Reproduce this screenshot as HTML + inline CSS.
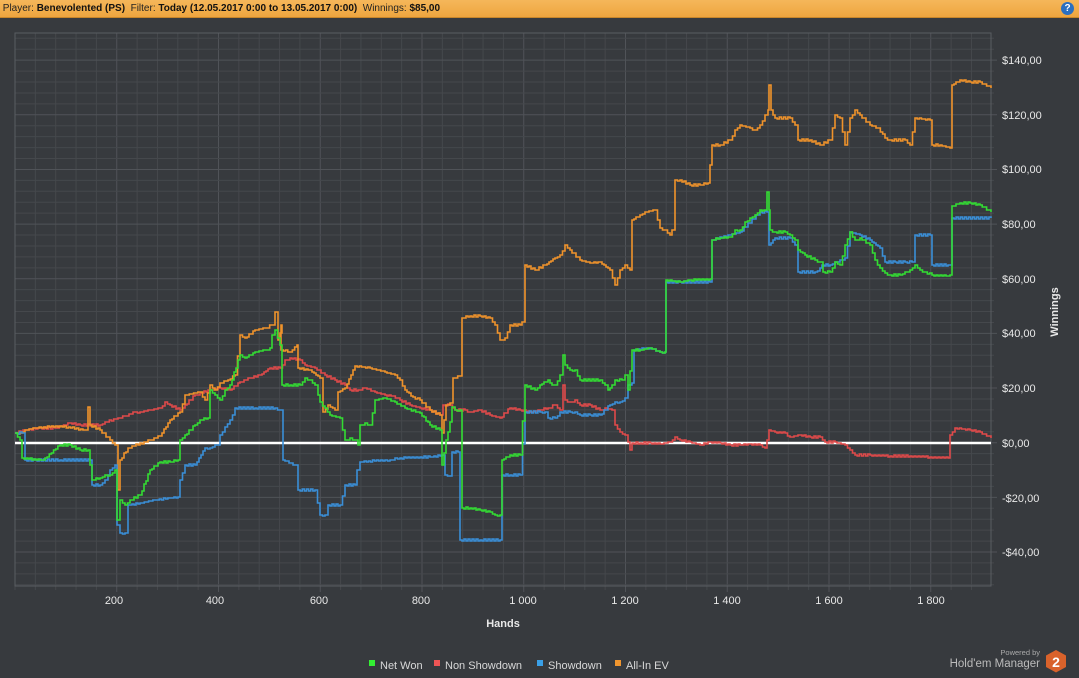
<!DOCTYPE html>
<html><head><meta charset="utf-8"><style>
html,body{margin:0;padding:0;background:#373a3e;width:1079px;height:678px;overflow:hidden;font-family:"Liberation Sans",sans-serif}
#hdr{position:absolute;left:0;top:0;width:1079px;height:17px;background:linear-gradient(#f5b75a,#eea53f);border-bottom:1px solid #c8862a;font-size:10px;line-height:17px;color:#222;white-space:nowrap}
#hdr b{font-weight:bold;color:#111}
#help{position:absolute;right:5px;top:2px;width:13px;height:13px;border-radius:50%;background:#2a6fc0;color:#fff;font-size:10px;font-weight:bold;text-align:center;line-height:13px}
svg{position:absolute;left:0;top:0}
</style></head><body>
<div id="hdr">&nbsp;Player: <b>Benevolented (PS)</b> &nbsp;Filter: <b>Today (12.05.2017 0:00 to 13.05.2017 0:00)</b> &nbsp;Winnings: <b>$85,00</b><div id="help">?</div></div>
<svg id="s" width="1079" height="678" xmlns="http://www.w3.org/2000/svg">
<g id="grid"></g>
<rect x="15" y="33" width="976" height="553" fill="none" stroke="#5a5d62" stroke-width="1"/>
<g font-size="11" fill="#e8e8e8" font-family="Liberation Sans,sans-serif">
<g text-anchor="middle">
<text x="114" y="604">200</text><text x="215" y="604">400</text><text x="319" y="604">600</text><text x="421" y="604">800</text><text x="523" y="604">1 000</text><text x="625" y="604">1 200</text><text x="727" y="604">1 400</text><text x="829" y="604">1 600</text><text x="931" y="604">1 800</text>
<text x="503" y="627" font-weight="bold">Hands</text>
</g>
<text x="1002" y="64">$140,00</text><text x="1002" y="119">$120,00</text><text x="1002" y="173">$100,00</text><text x="1002" y="228">$80,00</text><text x="1002" y="283">$60,00</text><text x="1002" y="337">$40,00</text><text x="1002" y="392">$20,00</text><text x="1002" y="447">$0,00</text><text x="1002" y="502">-$20,00</text><text x="1002" y="556">-$40,00</text>
<text transform="translate(1058,312) rotate(-90)" text-anchor="middle" font-weight="bold">Winnings</text>
</g>
<line x1="15" y1="443" x2="991" y2="443" stroke="#fff" stroke-width="2.5"/>
<g fill="none" stroke-width="1.6" stroke-linejoin="miter" id="series">
<polyline stroke="#e04a4a" points="15,433 25,430 40,428 55,428 70,423 80,425 100,425 105,422 118,418 125,416 135,412 140,412 150,410 160,408 165,402 170,405 180,410 185,405 195,395 200,393 210,390 220,388 230,390 240,382 250,378 260,375 270,368 280,368 285,360 290,358 300,360 305,365 315,368 325,375 335,380 345,385 350,390 358,390 365,388 375,392 385,395 393,396 400,400 410,405 420,408 430,410 440,415 443,405 450,405 455,410 465,410 470,412 480,410 490,415 500,418 510,408 520,410 530,412 540,410 548,408 555,405 560,410 563,385 565,400 570,402 575,400 580,405 590,405 600,410 605,408 612,410 615,425 620,432 625,435 628,442 630,450 632,443 640,443 650,443 660,444 670,442 675,437 680,440 690,442 700,445 710,442 720,443 730,445 740,445 750,444 760,445 765,448 769,430 775,432 785,433 790,437 800,435 810,437 820,437 825,442 835,442 845,445 850,450 855,455 870,455 890,456 910,456 930,457 948,458 950,435 955,428 970,430 980,432 991,438"/>
<polyline stroke="#f0932b" points="15,433 20,433 25,430 35,428 60,426 85,430 88,407 90,425 100,430 110,440 115,445 118,490 120,460 128,448 150,440 160,436 170,420 180,412 185,395 200,392 205,400 210,385 215,390 220,383 228,380 235,375 240,335 245,338 255,330 265,328 272,325 275,312 278,340 282,325 281,350 290,352 297,345 298,368 310,370 320,378 323,412 328,405 335,410 338,392 345,388 355,366 370,368 385,372 395,375 400,380 405,390 413,397 420,400 430,410 440,415 442,433 446,405 450,403 453,378 460,376 462,318 470,316 480,316 490,318 495,325 500,340 505,338 510,325 520,325 522,322 525,265 535,270 545,265 555,258 560,255 565,245 570,250 580,260 590,263 600,262 610,270 615,285 620,270 625,265 630,270 632,220 640,215 645,212 655,210 660,228 665,230 670,235 672,230 675,180 680,180 690,185 700,185 708,183 712,145 720,145 730,140 735,130 740,125 750,128 755,130 760,125 765,115 768,110 769,85 771,110 775,118 790,118 795,125 798,140 810,140 820,145 830,140 835,115 840,118 845,145 850,118 855,110 860,115 870,125 878,128 885,138 890,140 905,140 910,145 915,118 930,120 932,145 940,145 950,148 952,85 960,80 970,82 980,82 991,88"/>
<polyline stroke="#3a8fd8" points="15,433 22,433 25,460 35,460 60,460 90,460 92,485 100,485 105,480 108,475 110,470 115,465 117,525 120,533 125,533 128,505 140,503 155,500 170,498 178,497 180,480 185,465 195,465 205,448 210,448 215,445 218,445 220,435 225,427 230,420 235,408 255,408 275,408 280,410 283,460 295,465 298,490 315,490 320,515 325,515 328,505 340,505 345,485 355,485 357,470 360,462 385,460 390,460 395,458 400,458 420,457 430,457 442,455 445,475 450,476 452,452 458,452 460,540 480,540 500,540 502,475 510,475 520,475 525,412 540,412 545,412 548,418 555,418 560,412 570,412 575,412 580,415 590,415 600,415 610,405 615,402 620,402 625,398 628,385 632,383 634,350 650,348 660,352 665,352 666,282 680,282 710,282 712,240 740,232 760,212 767,212 769,245 775,238 790,238 795,245 798,272 815,272 820,268 822,265 830,265 835,262 840,260 845,258 850,232 860,235 870,240 880,248 885,262 895,262 905,262 912,262 915,235 930,235 932,265 948,265 950,265 952,218 991,218"/>
<polyline stroke="#33dd33" points="15,433 20,440 22,458 40,460 45,458 60,445 70,445 80,450 88,450 90,465 92,480 100,478 105,475 110,475 115,470 117,520 120,500 125,505 130,500 140,495 150,470 160,462 170,462 178,460 180,440 185,435 195,425 200,420 208,418 210,390 215,395 220,400 225,390 230,385 240,355 245,358 255,352 265,350 270,348 272,335 275,330 280,345 282,385 290,385 300,385 305,378 310,380 315,385 318,395 320,402 325,408 330,415 340,418 345,440 350,438 355,440 358,445 360,425 365,423 370,425 375,400 385,398 395,402 405,408 420,413 430,425 440,430 442,465 446,440 450,422 452,407 455,410 460,410 462,508 470,508 480,510 490,512 495,515 500,515 502,460 510,455 520,455 525,385 535,390 540,385 548,380 552,385 555,385 560,375 563,355 565,365 570,370 575,370 580,380 600,380 605,385 608,390 612,385 615,380 622,380 625,375 628,390 632,350 640,350 650,348 660,352 665,352 666,280 680,282 690,280 710,279 712,240 720,238 730,237 735,230 740,230 745,222 750,218 755,215 760,210 764,210 767,192 769,210 770,230 775,232 785,232 790,235 795,240 798,250 805,255 815,260 820,262 823,272 830,272 835,262 840,265 845,245 850,232 855,240 860,238 870,245 875,260 880,268 885,273 890,275 900,275 905,272 910,270 915,265 920,270 925,272 932,275 948,276 950,275 952,206 960,203 970,203 980,205 991,212"/>
</g>
<g font-size="11" fill="#d8d8d8" font-family="Liberation Sans,sans-serif">
<rect x="369" y="660" width="6" height="6" fill="#33ee33"/><text x="380" y="669">Net Won</text>
<rect x="434" y="660" width="6" height="6" fill="#ee5555"/><text x="445" y="669">Non Showdown</text>
<rect x="537" y="660" width="6" height="6" fill="#3aa0e8"/><text x="548" y="669">Showdown</text>
<rect x="615" y="660" width="6" height="6" fill="#f0962f"/><text x="626" y="669">All-In EV</text>
<text x="1040" y="655" font-size="7.5" fill="#aaa" text-anchor="end">Powered by</text>
<text x="1040" y="667" font-size="11.5" fill="#bbb" text-anchor="end">Hold'em Manager</text>
</g>
<polygon points="1056,650 1066,655.5 1066,667 1056,672.5 1046,667 1046,655.5" fill="#d9622b"/>
<text x="1056" y="667" font-size="14" font-weight="bold" fill="#fff" text-anchor="middle" font-family="Liberation Sans,sans-serif">2</text>
</svg>
<script>
var g=document.getElementById('grid'),h='';
for(var i=0;i<=48;i++){var x=15+i*20.35;if(x>991)break;var maj=(i%5==0&&i>0);
h+='<line x1="'+x+'" y1="33" x2="'+x+'" y2="'+(maj?592:590)+'" stroke="'+(maj?'#505358':'#45484c')+'"/>';}
for(var k=-13;k<=37;k++){var y=442.7-k*10.93;if(y<33||y>586)continue;var m=(k%5==0);
h+='<line x1="15" y1="'+y+'" x2="'+(m?997:994)+'" y2="'+y+'" stroke="'+(m?'#505358':'#45484c')+'"/>';}
g.innerHTML=h;
var pls=document.querySelectorAll('#series polyline');
for(var p=0;p<pls.length;p++){var pts=pls[p].getAttribute('points').trim().split(/\s+/).map(function(s){return s.split(',').map(Number);});
var out=[pts[0]];for(var j=1;j<pts.length;j++){var a=pts[j-1],b=pts[j];var dx=b[0]-a[0];
if(dx>3){var n=Math.floor(dx/2);for(var q=1;q<n;q++){var t=q/n;var yy=a[1]+(b[1]-a[1])*t;out.push([a[0]+dx*t,Math.round(yy+(q%2?0.6:-0.6))]);}}
out.push([b[0],out[out.length-1][1]]);out.push(b);}
var s=[];var prev=null;for(var j=0;j<out.length;j++){var c=out[j];if(prev)s.push(c[0]+','+prev[1]);s.push(c[0]+','+c[1]);prev=c;}
pls[p].setAttribute('points',s.join(' '));}
</script>
</body></html>
